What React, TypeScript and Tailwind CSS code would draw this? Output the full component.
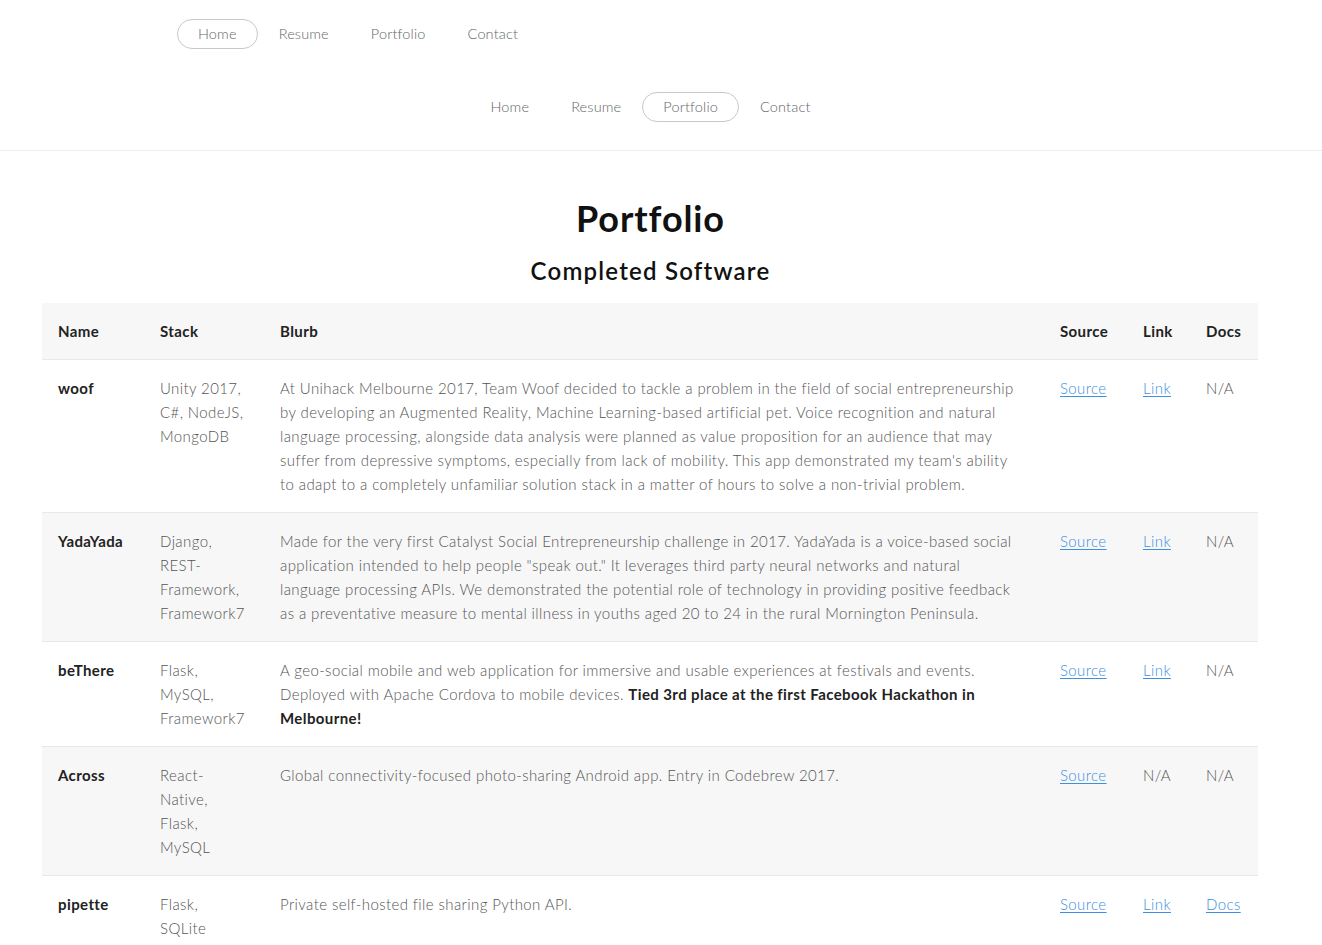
import React from 'react'

const font = { fontFamily: '"Lato", "Open Sans", sans-serif' }

type Row = {
  name: string
  stack: string[]
  blurb: React.ReactNode[]
  source: boolean
  link: boolean
  docs: boolean
}

const rows: Row[] = [
  {
    name: 'woof',
    stack: ['Unity 2017,', 'C#, NodeJS,', 'MongoDB'],
    blurb: [
      'At Unihack Melbourne 2017, Team Woof decided to tackle a problem in the field of social entrepreneurship',
      'by developing an Augmented Reality, Machine Learning-based artificial pet. Voice recognition and natural',
      'language processing, alongside data analysis were planned as value proposition for an audience that may',
      "suffer from depressive symptoms, especially from lack of mobility. This app demonstrated my team's ability",
      'to adapt to a completely unfamiliar solution stack in a matter of hours to solve a non-trivial problem.',
    ],
    source: true,
    link: true,
    docs: false,
  },
  {
    name: 'YadaYada',
    stack: ['Django,', 'REST-', 'Framework,', 'Framework7'],
    blurb: [
      'Made for the very first Catalyst Social Entrepreneurship challenge in 2017. YadaYada is a voice-based social',
      'application intended to help people "speak out." It leverages third party neural networks and natural',
      'language processing APIs. We demonstrated the potential role of technology in providing positive feedback',
      'as a preventative measure to mental illness in youths aged 20 to 24 in the rural Mornington Peninsula.',
    ],
    source: true,
    link: true,
    docs: false,
  },
  {
    name: 'beThere',
    stack: ['Flask,', 'MySQL,', 'Framework7'],
    blurb: [
      'A geo-social mobile and web application for immersive and usable experiences at festivals and events.',
      <>
        Deployed with Apache Cordova to mobile devices.{' '}
        <strong className="font-bold text-[#222]">Tied 3rd place at the first Facebook Hackathon in</strong>
      </>,
      <strong className="font-bold text-[#222]">Melbourne!</strong>,
    ],
    source: true,
    link: true,
    docs: false,
  },
  {
    name: 'Across',
    stack: ['React-', 'Native,', 'Flask,', 'MySQL'],
    blurb: ['Global connectivity-focused photo-sharing Android app. Entry in Codebrew 2017.'],
    source: true,
    link: false,
    docs: false,
  },
  {
    name: 'pipette',
    stack: ['Flask,', 'SQLite'],
    blurb: ['Private self-hosted file sharing Python API.'],
    source: true,
    link: true,
    docs: true,
  },
]

function NavItem({ label, active }: { label: string; active?: boolean }) {
  return (
    <a
      href="#"
      className={`px-5 h-[30px] flex items-center rounded-full border text-[14.5px] tracking-[0.15px] text-[#666] ${
        active ? 'border-[#c8c8c8]' : 'border-transparent'
      }`}
    >
      {label}
    </a>
  )
}

function A({ children }: { children: React.ReactNode }) {
  return (
    <a href="#" className="text-[#3d8fe0] underline underline-offset-2">
      {children}
    </a>
  )
}

export default function App() {
  return (
    <div className="bg-white min-h-screen text-[#555] font-light" style={font}>
      <header className="border-b border-[#eeeeee] h-[151px]">
        <nav className="flex pl-[177px] pt-[19px]">
          <NavItem label="Home" active />
          <NavItem label="Resume" />
          <NavItem label="Portfolio" />
          <NavItem label="Contact" />
        </nav>
        <nav className="flex justify-center w-[1301px] pt-[43px]">
          <NavItem label="Home" />
          <NavItem label="Resume" />
          <NavItem label="Portfolio" active />
          <NavItem label="Contact" />
        </nav>
      </header>
      <main className="w-[1301px] px-[42px] pb-10">
        <h1 className="text-center text-[36px] font-bold tracking-[0.9px] text-[#111] leading-none mt-[49px]">
          Portfolio
        </h1>
        <h2 className="text-center text-[24px] font-semibold tracking-[1.2px] text-[#111] leading-none mt-[23px]">
          Completed Software
        </h2>
        <table className="w-[1216px] table-fixed mt-[20px] border-collapse text-[15px] leading-6 tracking-[0.4px]">
          <colgroup>
            <col className="w-[102px]" />
            <col className="w-[120px]" />
            <col className="w-[780px]" />
            <col className="w-[83px]" />
            <col className="w-[63px]" />
            <col className="w-[68px]" />
          </colgroup>
          <thead>
            <tr className="bg-[#f7f7f7] text-left text-[#222] font-bold">
              <th className="px-4 h-[56px]">Name</th>
              <th className="px-4">Stack</th>
              <th className="px-4">Blurb</th>
              <th className="px-4">Source</th>
              <th className="px-4">Link</th>
              <th className="px-4">Docs</th>
            </tr>
          </thead>
          <tbody>
            {rows.map((r, i) => (
              <tr key={r.name} className={`border-t border-[#e8e8e8] align-top ${i % 2 ? 'bg-[#f7f7f7]' : 'bg-white'}`}>
                <td className="px-4 py-4 font-bold text-[#222]">{r.name}</td>
                <td className="px-4 py-4">
                  {r.stack.map((s, j) => (
                    <div key={j}>{s}</div>
                  ))}
                </td>
                <td className="px-4 py-4 whitespace-nowrap">
                  {r.blurb.map((b, j) => (
                    <div key={j}>{b}</div>
                  ))}
                </td>
                <td className="px-4 py-4">{r.source ? <A>Source</A> : 'N/A'}</td>
                <td className="px-4 py-4">{r.link ? <A>Link</A> : 'N/A'}</td>
                <td className="px-4 py-4">{r.docs ? <A>Docs</A> : 'N/A'}</td>
              </tr>
            ))}
          </tbody>
        </table>
      </main>
    </div>
  )
}
